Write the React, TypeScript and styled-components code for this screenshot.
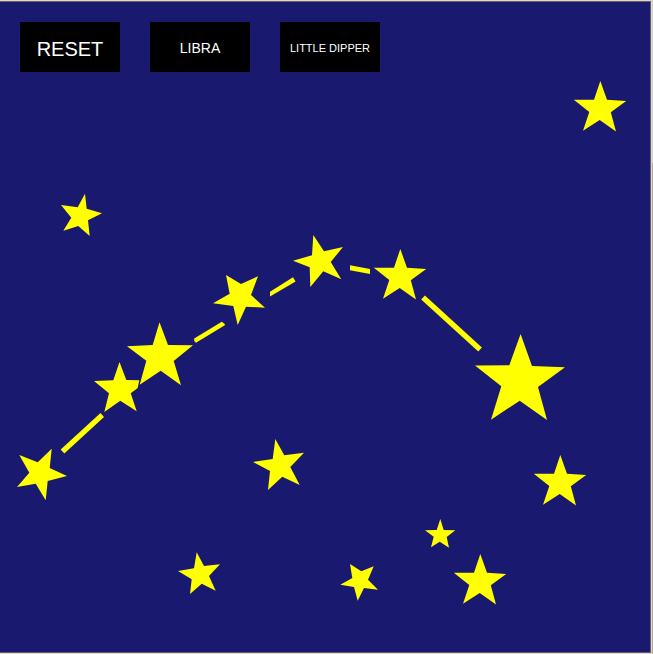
import React from "react";
import styled, { createGlobalStyle } from "styled-components";

const GlobalStyle = createGlobalStyle`
  html, body { margin: 0; padding: 0; overflow: hidden; }
`;

const Frame = styled.div`
  box-sizing: border-box;
  width: 653px;
  height: 654px;
  background:
    linear-gradient(#d6cfd0 163px, #b9a3a1 163px) right top / 1px 100% no-repeat,
    #ddd6d3;
  padding: 1px 2px 1px 0;
`;

const Stage = styled.main`
  box-sizing: border-box;
  position: relative;
  width: 651px;
  height: 652px;
  background: #191970;
  border: solid #6b6060;
  border-width: 1px 1px 1px 0;
`;

const Sky = styled.svg`
  position: absolute;
  inset: 0;
  display: block;
`;

const Toolbar = styled.nav`
  position: relative;
  display: flex;
  gap: 30px;
  padding: 20px;
`;

const SkyButton = styled.button<{ $size: number; $drop: number }>`
  box-sizing: border-box;
  width: 100px;
  height: 50px;
  padding: ${(p) => p.$drop}px 0 0;
  border: 0;
  background: #000;
  color: #fff;
  font: ${(p) => p.$size}px/1 "Liberation Sans", Arial, sans-serif;
  white-space: nowrap;
  text-align: center;
`;

const BUTTONS = [
  { label: "RESET", size: 20, drop: 4 },
  { label: "LIBRA", size: 14, drop: 2 },
  { label: "LITTLE DIPPER", size: 11, drop: 2 },
];

const UPRIGHT =
  "0.3,-28 7,-9.2 26.2,-8 10.8,3.3 16,22.5 -0.3,11 -17,21.8 -10.7,3 -26.2,-9.3 -6,-9.2";

const UPRIGHT_CENTERS = [
  [600, 109],
  [400, 277],
  [560, 483],
  [480, 582],
];

const STARS = [
  "85,193.7 86.7,208.7 102,213.3 88,220.3 89.7,236 78.3,226 63.3,230.7 71.3,217.7 61,205 77.7,207.3",
  "51.7,448.7 49.7,468 67,476 47.7,481 45.7,500.3 35.7,483.7 17,487 29.3,472.7 19.3,455 37.7,462.3",
  "119.5,362 126.3,380 139.3,380.3 137.7,388 130.7,393.3 136.7,411.3 120.3,400.7 104.3,412 109,393.3 94,381 113.3,380.3",
  "159.5,322.3 168,345 193,345.3 173.7,361 181,385.3 160.7,370.7 139.7,384.7 146.3,360.7 127,346.3 152.7,345",
  "258,276.3 251,295 265,307.7 246,306.7 237.7,325 233.3,306 213,303.3 229.7,293.7 226,275 241,284",
  "313.3,235 324,251.3 343,247 330.7,262 341.3,279.3 323.3,271.3 310.3,287 309.7,267.3 293,260.7 312,255.3",
  "520.6,334 532,366 565,367.3 538,387 547,420 519.7,400.7 491,419.7 501.3,386.3 475,365.5 509.3,365.3",
  "275.3,439 284.3,455.3 304,452.7 290.3,467 299.7,485 282.3,476.7 268,490 270,471 253,462 272.7,459",
  "196.7,552.3 204,566 220,564.3 209,576 215.7,590.7 201.7,583.7 190,594 191.7,579.3 178,571 194,568.3",
  "373.7,566.3 368,579.7 378,589.7 364,588 357.7,600.7 354,587 340.3,584.7 352.3,578 350,564 361.3,571.3",
  "440.3,519 443.7,530 455.3,530.3 446.7,537 449,547.7 439.7,541.7 431,547.3 433.7,536.7 425,530.3 436.7,530",
];

const LINKS = [
  "60.7,449.6 64.3,453.4 104,417 100.5,413",
  "194.2,338.6 194.2,341 196,342.7 224.8,325.2 224.8,324 221.8,321.8",
  "270,291.7 270,296.6 295.6,281.4 293,277.2",
  "350,265.2 350,270.3 370,274 370,269",
  "424.9,295.6 421.2,299.5 478.3,351.4 481.9,347.6",
];

export default function App() {
  return (
    <>
      <GlobalStyle />
      <Frame>
        <Stage>
          <Sky width="650" height="650" viewBox="0 2 650 650" fill="#ffff00" aria-hidden="true">
            {UPRIGHT_CENTERS.map(([x, y]) => (
              <polygon key={`${x}-${y}`} points={UPRIGHT} transform={`translate(${x} ${y})`} />
            ))}
            {STARS.map((points) => (
              <polygon key={points} points={points} />
            ))}
            {LINKS.map((points) => (
              <polygon key={points} points={points} />
            ))}
          </Sky>
          <Toolbar>
            {BUTTONS.map((b) => (
              <SkyButton key={b.label} $size={b.size} $drop={b.drop}>
                {b.label}
              </SkyButton>
            ))}
          </Toolbar>
        </Stage>
      </Frame>
    </>
  );
}
